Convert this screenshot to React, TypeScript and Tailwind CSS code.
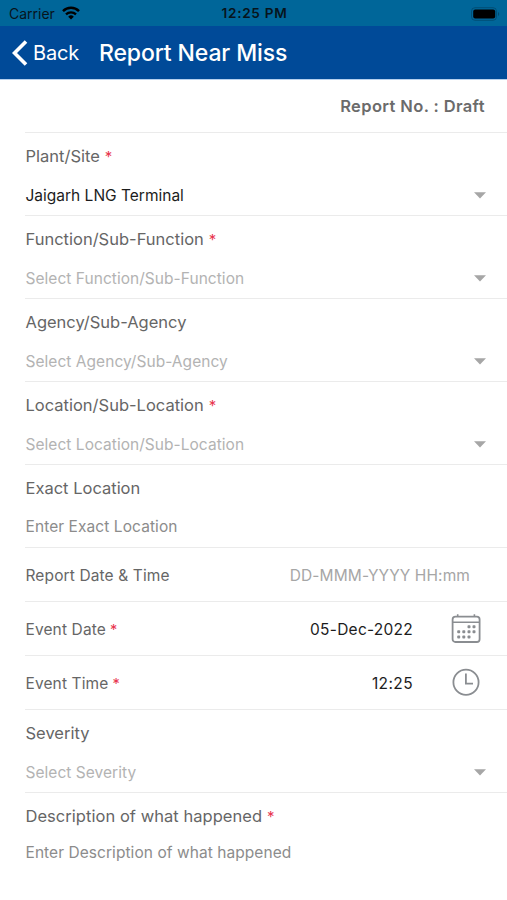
import type { ReactNode } from "react";

const Required = () => (
  <span className="ml-[5px] text-[15px] text-[#e8364f]">*</span>
);

const Caret = () => (
  <svg width="12" height="7" viewBox="0 0 12 7" className="mb-[2px] shrink-0">
    <path d="M0 0.3H12L6 6.5Z" fill="#a6a6a6" />
  </svg>
);

const WifiIcon = () => (
  <svg width="18" height="14" viewBox="0 0 18 14" fill="none">
    <path d="M1 5.1a11.4 11.4 0 0 1 16 0" stroke="#000" strokeWidth="2.5" />
    <path d="M4 8.3a7.2 7.2 0 0 1 10 0" stroke="#000" strokeWidth="2.3" />
    <path d="M9 13.6 6.2 10.7a4 4 0 0 1 5.6 0Z" fill="#000" />
  </svg>
);

const BatteryIcon = () => (
  <svg width="29" height="14" viewBox="0 0 29 14" fill="none">
    <rect
      x="0.5"
      y="0.7"
      width="25"
      height="12.6"
      rx="3.5"
      stroke="#00405f"
      strokeOpacity="0.6"
    />
    <rect x="2.2" y="2.5" width="22" height="9" rx="2" fill="#000" />
    <path d="M27 5c1.6.6 1.6 3.4 0 4Z" fill="#00405f" fillOpacity="0.7" />
  </svg>
);

const dots = [
  [18, 12.7],
  [23, 12.7],
  [7.7, 17.7],
  [12.8, 17.7],
  [18, 17.7],
  [23, 17.7],
  [7.7, 23],
  [12.8, 23],
  [18, 23],
];

const CalendarIcon = () => (
  <svg width="30" height="30" viewBox="0 0 30 30" fill="none">
    <rect
      x="1.6"
      y="2.6"
      width="27"
      height="25.4"
      rx="2.8"
      stroke="#8a8d91"
      strokeWidth="1.8"
    />
    <path
      d="M1.6 8.3H28.6M6.7 0.3V2.6M23.4 0.3V2.6"
      stroke="#8a8d91"
      strokeWidth="1.6"
    />
    {dots.map(([x, y]) => (
      <rect
        key={`${x}_${y}`}
        x={x - 1.5}
        y={y - 1.5}
        width="3"
        height="3"
        rx="0.9"
        fill="#8a8d91"
      />
    ))}
  </svg>
);

const ClockIcon = () => (
  <svg width="30" height="30" viewBox="0 0 30 30" fill="none">
    <circle cx="15" cy="14.3" r="12.6" stroke="#8a8d91" strokeWidth="1.8" />
    <path d="M14.9 5.4V15.7H22" stroke="#8a8d91" strokeWidth="1.8" />
  </svg>
);

const Field = ({
  label,
  required,
  children,
}: {
  label: string;
  required?: boolean;
  children: ReactNode;
}) => (
  <div className="ml-[25px] h-[83px] border-b border-[#ebebeb] pt-[11px] pl-[0.5px]">
    <div className="h-6 text-[16.5px] leading-6 text-[#666]">
      {label}
      {required && <Required />}
    </div>
    {children}
  </div>
);

const Select = ({ text, filled }: { text: string; filled?: boolean }) => (
  <div className="mt-4 flex h-6 items-center justify-between pr-[21px] text-[15.5px] leading-6">
    <span
      className={filled ? "text-[#1c1c1c]" : "tracking-[0.04px] text-[#b3b3b3]"}
    >
      {text}
    </span>
    <Caret />
  </div>
);

const Row = ({
  label,
  required,
  children,
}: {
  label: string;
  required?: boolean;
  children: ReactNode;
}) => (
  <div className="ml-[25px] flex h-[54px] items-center justify-between border-b border-[#ebebeb] pl-[0.5px] text-[15.5px]">
    <span className="pt-[2px] tracking-[0.12px] text-[#666]">
      {label}
      {required && (
        <span className="ml-1 text-[14.5px] text-[#e8364f]">*</span>
      )}
    </span>
    {children}
  </div>
);

const App = () => {
  return (
    <div className="h-[900px] w-full overflow-hidden bg-white font-['Inter',sans-serif] whitespace-nowrap">
      <div className="grid h-[26px] grid-cols-3 items-center bg-[#006699] pr-[7px] pl-[9px] text-[14px] text-[#07141c]">
        <div className="flex items-center gap-[7px]">
          <span>Carrier</span>
          <WifiIcon />
        </div>
        <div className="pt-px text-center text-[13.6px] font-semibold tracking-[0.7px]">
          12:25 PM
        </div>
        <div className="flex justify-end pt-px">
          <BatteryIcon />
        </div>
      </div>

      <header className="flex h-[53px] items-center bg-[#004a98] pl-[12px] text-white">
        <svg width="16" height="26" viewBox="0 0 16 26" fill="none">
          <path d="M14 1.5 2.5 13 14 24.5" stroke="#fff" strokeWidth="3.6" />
        </svg>
        <span className="ml-[5px] text-[20px] tracking-[-0.2px]">Back</span>
        <h1 className="ml-[20px] pt-px text-[23px] font-medium tracking-[-0.12px]">
          Report Near Miss
        </h1>
      </header>

      <main>
        <div className="h-px bg-[#b5d0ee]" />
        <div className="ml-[25px] flex h-[53px] items-center justify-end border-b border-[#ebebeb] pr-[22px] text-[16.5px] font-semibold tracking-[0.38px] text-[#6b6b6b]">
          Report No. : Draft
        </div>
        <Field label="Plant/Site" required>
          <Select text="Jaigarh LNG Terminal" filled />
        </Field>
        <Field label="Function/Sub-Function" required>
          <Select text="Select Function/Sub-Function" />
        </Field>
        <Field label="Agency/Sub-Agency">
          <Select text="Select Agency/Sub-Agency" />
        </Field>
        <Field label="Location/Sub-Location" required>
          <Select text="Select Location/Sub-Location" />
        </Field>
        <Field label="Exact Location">
          <div className="mt-[15px] text-[15.5px] leading-6 tracking-[0.08px] text-[#8c8c8c]">
            Enter Exact Location
          </div>
        </Field>
        <Row label="Report Date &amp; Time">
          <span className="pt-[2px] pr-[37px] tracking-[0.1px] text-[#a6a6a6]">
            DD-MMM-YYYY HH:mm
          </span>
        </Row>
        <Row label="Event Date" required>
          <div className="flex items-center gap-[38px] pr-[26px]">
            <span className="pt-[2px] tracking-[0.25px] text-[#1c1c1c]">
              05-Dec-2022
            </span>
            <CalendarIcon />
          </div>
        </Row>
        <Row label="Event Time" required>
          <div className="flex items-center gap-[38px] pr-[26px]">
            <span className="pt-[2px] tracking-[0.4px] text-[#1c1c1c]">
              12:25
            </span>
            <ClockIcon />
          </div>
        </Row>
        <Field label="Severity">
          <Select text="Select Severity" />
        </Field>
        <div className="ml-[25px] pt-[11px] pl-[0.5px]">
          <div className="h-6 text-[16.5px] leading-6 tracking-[0.04px] text-[#666]">
            Description of what happened
            <Required />
          </div>
          <div className="mt-[13px] text-[15.5px] leading-6 tracking-[0.06px] text-[#8c8c8c]">
            Enter Description of what happened
          </div>
        </div>
      </main>
    </div>
  );
};

export default App;
